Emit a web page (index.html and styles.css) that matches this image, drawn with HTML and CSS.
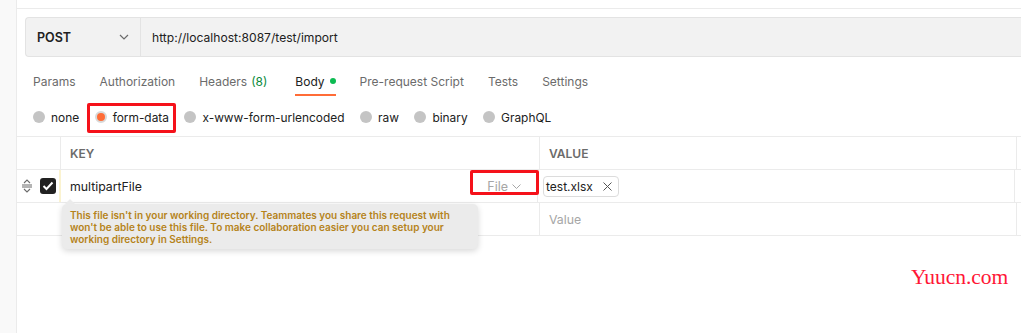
FILE: index.html
```html
<!DOCTYPE html>
<html lang="en">

<head>
    <meta charset="UTF-8">
    <meta name="viewport" content="width=device-width, initial-scale=1.0">
    <title>Request</title>
    <link rel="stylesheet" href="styles.css">
</head>

<body>
    <div class="sidebar"></div>
    <div class="main">
        <div class="topbar"></div>

        <div class="request">
            <div class="method">
                <span>POST</span>
                <svg width="10" height="6" viewBox="0 0 10 6"><path d="M1 1l4 4 4-4" fill="none" stroke="#6b6b6b" stroke-width="1.2"/></svg>
            </div>
            <div class="url">http://localhost:8087/test/import</div>
        </div>

        <div class="tabs">
            <span class="tab">Params</span>
            <span class="tab">Authorization</span>
            <span class="tab">Headers <em>(8)</em></span>
            <span class="tab active">Body<i class="dot"></i></span>
            <span class="tab">Pre-request Script</span>
            <span class="tab">Tests</span>
            <span class="tab">Settings</span>
        </div>

        <div class="body-types">
            <label class="radio"><i></i>none</label>
            <label class="radio checked"><i></i>form-data</label>
            <label class="radio"><i></i>x-www-form-urlencoded</label>
            <label class="radio"><i></i>raw</label>
            <label class="radio"><i></i>binary</label>
            <label class="radio"><i></i>GraphQL</label>
            <div class="mark mark-form"></div>
        </div>

        <div class="table">
            <div class="row head">
                <div class="cell handle"></div>
                <div class="cell key">KEY</div>
                <div class="cell value">VALUE</div>
                <div class="cell rest"></div>
            </div>
            <div class="row">
                <div class="cell handle">
                    <svg width="12" height="14" viewBox="0 0 12 14"><path d="M3 4l3-3 3 3M1 6h10M1 8h10M3 10l3 3 3-3" fill="none" stroke="#6b6b6b" stroke-width="1.1"/></svg>
                    <span class="check">
                        <svg width="12" height="10" viewBox="0 0 12 10"><path d="M1.5 5l3 3 6-6.5" fill="none" stroke="#fff" stroke-width="2"/></svg>
                    </span>
                </div>
                <div class="cell key warn">
                    <span>multipartFile</span>
                    <span class="type">File
                        <svg width="9" height="5" viewBox="0 0 9 5"><path d="M.5.5l4 4 4-4" fill="none" stroke="#a6a6a6" stroke-width="1"/></svg>
                    </span>
                    <div class="mark mark-type"></div>
                </div>
                <div class="cell value">
                    <span class="chip">test.xlsx
                        <svg width="9" height="9" viewBox="0 0 9 9"><path d="M.5.5l8 8M8.5.5l-8 8" fill="none" stroke="#555" stroke-width="1"/></svg>
                    </span>
                </div>
                <div class="cell rest"></div>
            </div>
            <div class="row">
                <div class="cell handle"></div>
                <div class="cell key"></div>
                <div class="cell value placeholder">Value</div>
                <div class="cell rest"></div>
            </div>

            <div class="tooltip">
                This file isn't in your working directory. Teammates you share this request with
                won't be able to use this file. To make collaboration easier you can setup your
                working directory in Settings.
            </div>
        </div>

        <div class="watermark">Yuucn.com</div>
    </div>
</body>

</html>
```

FILE: styles.css
```css
* {
    box-sizing: border-box;
}

body,
html {
    margin: 0;
    height: 100%;
    overflow: hidden;
    background-color: #fff;
}

body {
    display: flex;
    font-family: "Inter", "Noto Sans", sans-serif;
    font-size: 12px;
    color: #212121;
}

.sidebar {
    width: 17px;
    flex: none;
    background-color: #f9f9f9;
    border-right: 1px solid #ebebeb;
}

.main {
    position: relative;
    flex: 1;
    display: flex;
    flex-direction: column;
}

.topbar {
    height: 9px;
    border-bottom: 1px solid #ebebeb;
}

/* request bar */

.request {
    display: flex;
    height: 40px;
    margin: 8px 0 0 8px;
    background-color: #f2f2f2;
    border: 1px solid #e3e3e3;
    border-right: none;
    border-radius: 4px 0 0 4px;
}

.method {
    width: 115px;
    display: flex;
    align-items: center;
    justify-content: space-between;
    padding: 0 11px 0 11px;
    border-right: 1px solid #e3e3e3;
    font-weight: 600;
    font-size: 12.5px;
}

.url {
    display: flex;
    align-items: center;
    padding-left: 11px;
    font-size: 12.1px;
}

/* tabs */

.tabs {
    display: flex;
    height: 43px;
    padding-left: 16px;
    gap: 24px;
}

.tab {
    display: flex;
    align-items: center;
    position: relative;
    padding-top: 5px;
    color: #6b6b6b;
    font-size: 12px;
}

.tab em {
    font-style: normal;
    color: #0a8a3c;
    margin-left: 4px;
}

.tab.active {
    margin-left: 4px;
    color: #212121;
}

.tab.active::after {
    content: "";
    position: absolute;
    left: 0;
    right: 0;
    bottom: 4px;
    height: 2px;
    background-color: #ff6c37;
}

.dot {
    width: 6px;
    height: 6px;
    border-radius: 50%;
    background-color: #0cbb52;
    margin-left: 5px;
}

/* body types */

.body-types {
    position: relative;
    display: flex;
    align-items: center;
    height: 37px;
    padding-left: 16px;
    padding-bottom: 2px;
    gap: 15.5px;
    border-bottom: 1px solid #ebebeb;
}

.radio {
    display: flex;
    align-items: center;
    gap: 6px;
    font-size: 11.9px;
    color: #212121;
}

.radio i {
    width: 12px;
    height: 12px;
    border-radius: 50%;
    background-color: #c4c4c4;
}

.radio.checked i {
    background-color: #ff6c37;
    border: 2px solid #d9d9d9;
}

.mark {
    position: absolute;
    border: 3px solid #f5111a;
    border-radius: 2px;
}

.mark-form {
    left: 70px;
    top: 3px;
    width: 89px;
    height: 30px;
}

/* params table */

.table {
    position: relative;
}

.row {
    display: flex;
    height: 33px;
    border-bottom: 1px solid #ebebeb;
}

.cell {
    display: flex;
    align-items: center;
    border-right: 1px solid #ebebeb;
}

.handle {
    width: 44px;
    padding-left: 4px;
    gap: 7px;
    border-right: none;
}

.head .handle {
    border-right: 1px solid #ebebeb;
}

.key {
    position: relative;
    width: 479px;
    padding-left: 9px;
    font-size: 12.3px;
}

.warn {
    border-left: 2px solid #fbf3d0;
    margin-left: -2px;
}

.value {
    width: 477px;
    padding-left: 5px;
    font-size: 12.3px;
}

.rest {
    flex: 1;
    border-right: none;
}

.head .cell {
    font-weight: 600;
    font-size: 12px;
    color: #6b6b6b;
}

.head .value {
    padding-left: 9px;
}

.check {
    display: flex;
    align-items: center;
    justify-content: center;
    width: 16px;
    height: 16px;
    border-radius: 3px;
    background-color: #212121;
}

.type {
    margin-left: auto;
    margin-right: 16px;
    display: flex;
    align-items: center;
    gap: 4px;
    font-size: 12.5px;
    color: #a6a6a6;
}

.mark-type {
    left: 409px;
    top: 0;
    width: 69px;
    height: 25px;
}

.chip {
    display: flex;
    align-items: center;
    gap: 10px;
    height: 21px;
    padding: 0 6px 0 2px;
    border: 1px solid #dcdcdc;
    border-radius: 4px;
    font-size: 12px;
    color: #212121;
}

.placeholder {
    padding-left: 9px;
    color: #a6a6a6;
}

.tooltip {
    position: absolute;
    left: 45px;
    top: 67px;
    width: 416px;
    padding: 5px 8px 4px 8px;
    background-color: #ebebeb;
    border-radius: 5px;
    box-shadow: 0 2px 6px rgba(0, 0, 0, 0.16);
    font-size: 10px;
    line-height: 12px;
    font-weight: 600;
    color: #b5831a;
}

.tooltip::before {
    content: "";
    position: absolute;
    left: 3px;
    top: -5px;
    border: 5px solid transparent;
    border-top: none;
    border-bottom-color: #ebebeb;
}

.watermark {
    position: absolute;
    left: 894px;
    top: 265px;
    font-family: "Liberation Serif", serif;
    font-size: 21.5px;
    color: #ff1636;
}
```
